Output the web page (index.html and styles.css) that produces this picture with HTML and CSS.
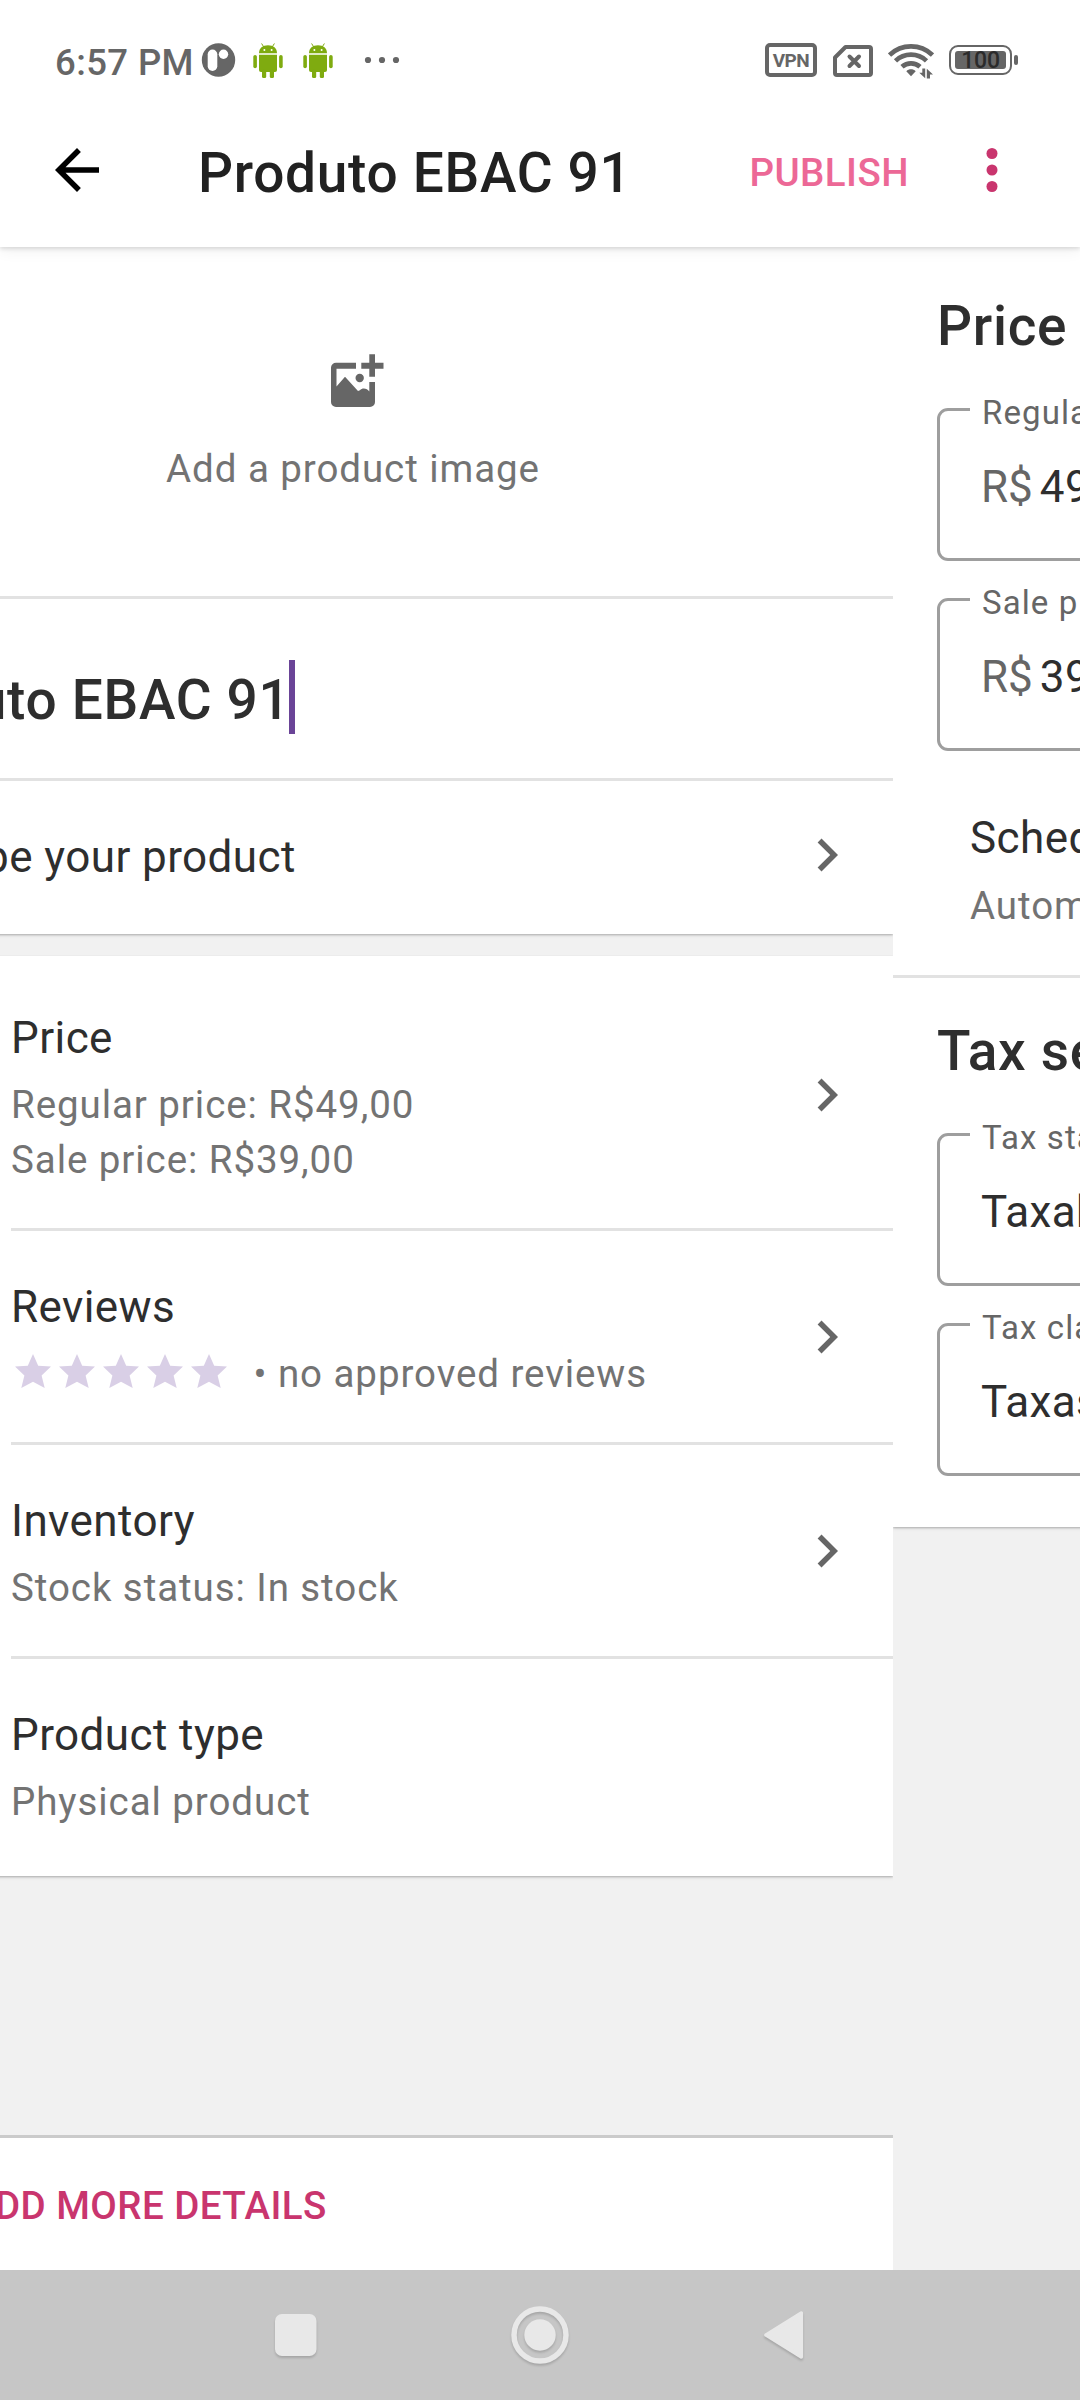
FILE: index.html
```html
<!DOCTYPE html>
<html lang="en">
<head>
<meta charset="utf-8">
<title>Produto EBAC 91</title>
<link rel="stylesheet" href="styles.css">
</head>
<body>
<svg class="defs" aria-hidden="true">
  <symbol id="android" viewBox="0 0 30 36">
    <path d="M6 11.2C6 6 9.600 3.200 15 3.200S24 6 24 11.200z"/>
    <path d="M8.600 1.500l2.200 3.500M21.400 1.500L19.200 5" stroke="#7fab10" stroke-width="1"/>
    <path d="M6 12.700h18V28a2 2 0 0 1-2 2H8a2 2 0 0 1-2-2z"/>
    <rect x="0.300" y="13" width="3.600" height="13.200" rx="1.800"/>
    <rect x="26.100" y="13" width="3.600" height="13.200" rx="1.800"/>
    <rect x="9" y="27" width="4.200" height="9.300" rx="2"/>
    <rect x="16.800" y="27" width="4.200" height="9.300" rx="2"/>
    <circle cx="11.400" cy="8" r="1" fill="#fff"/>
    <circle cx="18.600" cy="8" r="1" fill="#fff"/>
  </symbol>
  <symbol id="chevron" viewBox="0 0 24 24"><path d="M10 6L8.590 7.410 13.170 12l-4.580 4.590L10 18l6-6z"/></symbol>
  <symbol id="star" viewBox="0 0 36 34"><path d="M18 0l5.200 11.700L36 12.600 26.600 21.500 29.700 34 18 27.700 6.300 34l3.100-12.500L0 12.600l12.800-.9z"/></symbol>
</svg>

<div class="screen">
  <header class="status">
    <span class="time">6:57 PM</span>
    <svg class="pin" viewBox="0 0 35 34"><circle cx="17.500" cy="17" r="16.700" fill="#666"/><rect x="6.700" y="6.500" width="9.600" height="21.500" rx="4.800" fill="#fff"/><circle cx="22.500" cy="11.300" r="4.700" fill="#fff"/></svg>
    <svg class="droid"><use href="#android"/></svg>
    <svg class="droid"><use href="#android"/></svg>
    <svg class="dots" viewBox="0 0 36 8"><circle cx="4" cy="4" r="3.100"/><circle cx="18" cy="4" r="3.100"/><circle cx="32" cy="4" r="3.100"/></svg>
    <span class="vpn">VPN</span>
    <svg class="sim" viewBox="0 0 40 32"><path d="M12.500 2H36a2 2 0 0 1 2 2v24a2 2 0 0 1-2 2H4a2 2 0 0 1-2-2V12.500z" fill="none" stroke="#666" stroke-width="4" stroke-linejoin="round"/><path d="M16.500 11.500l9.500 9.500M26 11.500L16.500 21" stroke="#666" stroke-width="4" stroke-linecap="round"/></svg>
    <svg class="wifi" viewBox="0 0 46 36"><g fill="none" stroke="#666" stroke-width="4.700"><path d="M1.500 12a31 31 0 0 1 43 0"/><path d="M7.500 17.900a22.500 22.500 0 0 1 31 0"/><path d="M14 23.800a13.500 13.500 0 0 1 18 0"/></g><path d="M23 33.200l-4.700-4.900c2.600-2.600 6.800-2.600 9.400 0z" fill="#666"/><path d="M37.200 25.500v9.700l-5.900-5.400h3v-4.300zM38.800 35.500v-9.700l6.200 5.700h-3v4z" fill="#666"/></svg>
    <span class="battery"><span class="charge">100</span></span><span class="knob"></span>
  </header>

  <div class="appbar">
    <svg class="back" viewBox="0 0 24 24"><path d="M20 11H7.830l5.590-5.590L12 4l-8 8 8 8 1.410-1.410L7.830 13H20z"/></svg>
    <h1 class="heading toolbar-title">Produto EBAC 91</h1>
    <span class="button publish">PUBLISH</span>
    <svg class="menu" viewBox="0 0 24 24"><circle cx="12" cy="6" r="2"/><circle cx="12" cy="12" r="2"/><circle cx="12" cy="18" r="2"/></svg>
  </div>

  <main class="panes">
    <section class="pane product">
      <div class="card">
        <div class="image-slot">
          <svg class="add-image" viewBox="0 0 66 66"><g fill="#666"><path d="M36 17.700H16a5 5 0 0 0-5 5V57a5 5 0 0 0 5 5h34a5 5 0 0 0 5-5V37h-5.700v9.500c-2.200-3.500-7.200-4-9.400-1.200L38 46 25 31.700 16.500 41.500V23.700H36z"/><path d="M49.300 9.300h5.700v8.400h8.500v6H55v8h-5.700v-8h-8v-6h8z"/><circle cx="39.700" cy="33" r="4.200"/></g></svg>
          <span class="body">Add a product image</span>
        </div>
        <div class="name-field"><span class="heading">Produto EBAC 91</span><i class="cursor"></i></div>
        <div class="row describe"><span class="title">Describe your product</span><svg class="chevron"><use href="#chevron"/></svg></div>
      </div>
      <div class="card details">
        <div class="row"><div class="text"><span class="title">Price</span><span class="body">Regular price: R$49,00</span><span class="body">Sale price: R$39,00</span></div><svg class="chevron"><use href="#chevron"/></svg></div>
        <div class="row"><div class="text"><span class="title">Reviews</span>
          <span class="rating"><svg class="star"><use href="#star"/></svg><svg class="star"><use href="#star"/></svg><svg class="star"><use href="#star"/></svg><svg class="star"><use href="#star"/></svg><svg class="star"><use href="#star"/></svg><span class="body reviews">• no approved reviews</span></span></div><svg class="chevron"><use href="#chevron"/></svg></div>
        <div class="row"><div class="text"><span class="title">Inventory</span><span class="body">Stock status: In stock</span></div><svg class="chevron"><use href="#chevron"/></svg></div>
        <div class="row"><div class="text"><span class="title">Product type</span><span class="body">Physical product</span></div></div>
      </div>
      <div class="add-more"><span class="button">ADD MORE DETAILS</span></div>
    </section>

    <section class="pane pricing">
      <div class="card">
        <div class="group price-group">
          <h2 class="heading">Price</h2>
          <fieldset class="field"><legend>Regular price</legend><span class="value"><span class="currency">R$</span>49,00</span></fieldset>
          <fieldset class="field"><legend>Sale price</legend><span class="value"><span class="currency">R$</span>39,00</span></fieldset>
          <div class="schedule"><span class="title">Schedule sale</span><span class="body">Automatically start and end a sale</span></div>
        </div>
        <div class="group tax-group">
          <h2 class="heading">Tax settings</h2>
          <fieldset class="field"><legend>Tax status</legend><span class="value">Taxable</span></fieldset>
          <fieldset class="field"><legend>Tax class</legend><span class="value">Taxas</span></fieldset>
        </div>
      </div>
    </section>
  </main>

  <nav class="navbar">
    <svg class="nav-icon" viewBox="0 0 60 60"><rect x="9" y="9" width="41.500" height="42" rx="7"/></svg>
    <svg class="nav-icon" viewBox="0 0 60 60"><circle cx="30" cy="30" r="26" fill="none" stroke="#e8e8e8" stroke-width="5.500"/><circle cx="30" cy="30" r="15.700"/></svg>
    <svg class="nav-icon" viewBox="0 0 60 60"><path d="M12 30L47.300 8v44z" stroke="#e8e8e8" stroke-width="3.500" stroke-linejoin="round"/></svg>
  </nav>
</div>
</body>
</html>
```
FILE: styles.css
```css
* { box-sizing: border-box; }
body {
  margin: 0;
  font-family: Roboto, sans-serif;
  color: #2e2e2e;
  background: #f1f1f1;
}
svg { display: block; flex: none; }
.defs { position: absolute; width: 0; height: 0; }
h1, h2 { margin: 0; }

.screen {
  width: 1080px;
  height: 2400px;
  display: flex;
  flex-direction: column;
  overflow: hidden;
}

/* Type */
.heading, .title, .body, .button { display: block; white-space: nowrap; }
.heading { font-size: 55px; line-height: 64px; font-weight: 500; letter-spacing: 0.69px; }
.title { font-size: 44px; line-height: 52px; letter-spacing: 0.42px; }
.body { font-size: 38.5px; line-height: 55px; letter-spacing: 0.93px; color: #737373; }
.button { font-size: 38.5px; line-height: 55px; font-weight: 500; letter-spacing: 0.45px; color: #c9356e; }

/* Status bar */
.status {
  position: relative;
  z-index: 2;
  height: 93px;
  padding: 27px 62px 0 55px;
  display: flex;
  align-items: center;
  background: #fff;
  flex: none;
}
.time {
  width: 146px;
  padding-top: 5px;
  font-size: 36.5px;
  font-weight: 500;
  line-height: 44px;
  letter-spacing: 0.4px;
  white-space: nowrap;
  color: #666;
}
.pin { width: 35px; height: 34px; }
.droid { width: 30px; height: 36px; margin-left: 17px; fill: #7fab10; }
.droid + .droid { margin-left: 20px; }
.dots { width: 36px; height: 8px; margin: 0 auto 0 31px; fill: #666; }
.vpn {
  width: 52px;
  height: 34px;
  border: 4px solid #666;
  border-radius: 5px;
  font-size: 19px;
  font-weight: 700;
  line-height: 27px;
  letter-spacing: -0.5px;
  text-align: center;
  color: #666;
}
.sim { width: 40px; height: 32px; margin: 2px 0 0 16px; }
.wifi { width: 46px; height: 36px; margin: 1px 0 0 15px; }
.battery {
  width: 63px;
  height: 30px;
  margin-left: 15px;
  padding: 4px;
  border: 2.500px solid #666;
  border-radius: 9px;
}
.charge {
  display: block;
  height: 18px;
  border-radius: 3px;
  background: #666;
  color: #2b2b2b;
  font-size: 23px;
  font-weight: 500;
  line-height: 20px;
  letter-spacing: -0.2px;
  text-align: center;
}
.knob { width: 4px; height: 10px; margin-left: 2px; border-radius: 2px; background: #666; }

/* App bar */
.appbar {
  position: relative;
  z-index: 1;
  height: 154px;
  padding: 0 55px 0 44px;
  display: flex;
  align-items: center;
  background: #fff;
  box-shadow: 0 2px 4px rgba(0,0,0,.12), 0 4px 14px rgba(0,0,0,.06);
  flex: none;
}
.back { width: 66px; height: 66px; }
.toolbar-title { margin: 6px auto 0 88px; color: #212121; }
.publish { margin: 4px 50px 0 0; color: #ec6896; }
.menu { width: 66px; height: 66px; fill: #c9356e; }

.panes { flex: 1; min-height: 0; display: flex; margin-left: -187px; }
.pane { width: 1080px; flex: none; }
.product { display: flex; flex-direction: column; }
.card { background: #fff; box-shadow: 0 1px 2px rgba(0,0,0,.25), 0 2px 4px rgba(0,0,0,.06); }
.product .card { clip-path: inset(-1px 0 -8px 0); }
.pricing .card { clip-path: inset(0 0 -8px 0); }

.image-slot {
  height: 352px;
  padding-top: 98px;
  border-bottom: 3px solid #e2e2e2;
  display: flex;
  flex-direction: column;
  align-items: center;
  gap: 30px;
}
.add-image { width: 66px; height: 66px; }
.name-field {
  height: 182px;
  padding: 0 44px;
  border-bottom: 3px solid #e2e2e2;
  display: flex;
  align-items: center;
}
.name-field .heading { width: 432px; padding-top: 23px; }
.cursor { width: 6px; height: 74px; margin-top: 16px; background: #6a4497; }

.row { display: flex; align-items: center; justify-content: space-between; padding-right: 33px; }
.describe { height: 153px; padding: 0 33px 6px 45px; }
.describe .title { padding-top: 5px; }
.chevron { width: 66px; height: 66px; fill: #666; }

.details { margin-top: 22px; padding: 6px 0 6px 198px; }
.details .row { border-bottom: 3px solid #e2e2e2; }
.details .row:last-child { border-bottom: 0; }
.text { padding: 50px 0 41px; }
.text .title { margin-bottom: 13px; }
.rating { display: flex; gap: 8px; padding-left: 4px; }
.star { width: 36px; height: 34px; margin-top: 8px; fill: #d9cfe6; }
.reviews { margin-left: 18.5px; }

.add-more {
  height: 135px;
  margin-top: auto;
  padding: 40px 0 0 156px;
  border-top: 3px solid #cbcbcb;
  background: #fff;
}

.group { padding: 0 44px; }
.price-group { height: 731px; padding-top: 47px; border-bottom: 3px solid #e2e2e2; }
.tax-group { height: 549px; padding-top: 41px; }
.field {
  height: 174px;
  margin: 29px 0 0;
  padding: 29px 41px 0 30px;
  border: 3px solid #9e9e9e;
  border-radius: 11px;
}
.field + .field { margin-top: 16px; }
.field legend {
  height: 45px;
  padding: 7px 11px 0 12px;
  font-size: 33px;
  line-height: 38px;
  letter-spacing: 1.1px;
  color: #666;
}
.value { display: block; padding-left: 11px; font-size: 44px; line-height: 52px; letter-spacing: 0.4px; }
.currency { margin-right: 7px; letter-spacing: 0; color: #666; }
.schedule { padding: 61px 0 0 33px; }
.schedule .body { margin-top: 14px; }

/* System navigation */
.navbar {
  position: relative;
  height: 130px;
  display: flex;
  justify-content: center;
  align-items: center;
  gap: 184px;
  background: #c6c6c6;
  flex: none;
}
.nav-icon { width: 60px; height: 60px; fill: #e8e8e8; filter: drop-shadow(0 2px 1px rgba(0,0,0,.16)); }
```
